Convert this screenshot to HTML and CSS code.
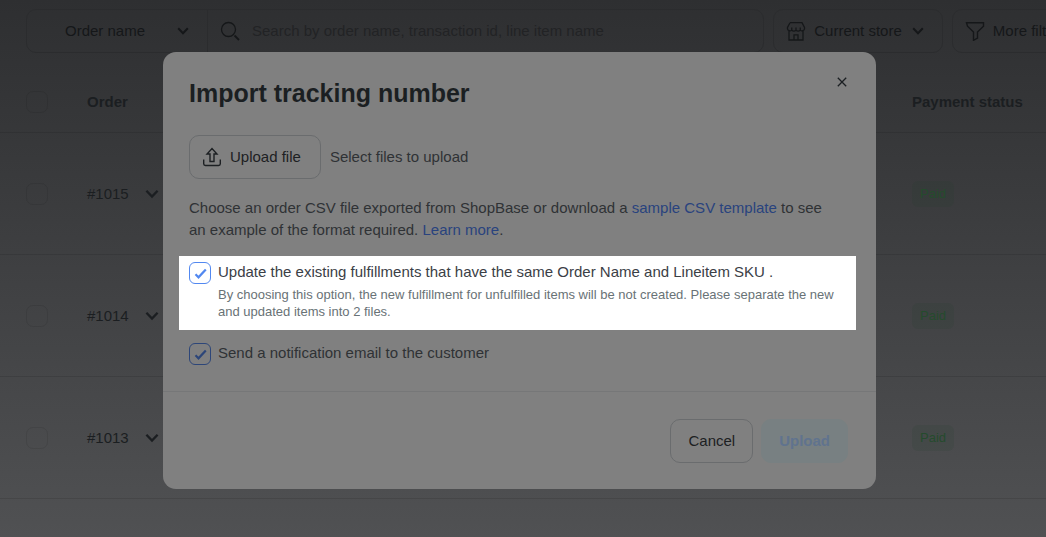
FILE: index.html
```html
<!DOCTYPE html>
<html lang="en">
<head>
<meta charset="utf-8">
<meta name="viewport" content="width=device-width, initial-scale=1">
<title>Import tracking number</title>
<link rel="stylesheet" href="styles.css">
</head>
<body>
<svg class="sprite" aria-hidden="true">
  <symbol id="chevron" viewBox="0 0 12 8"><path d="M1.2 1.2 6 6.2l4.800-5" fill="none" stroke="currentColor" stroke-width="2"/></symbol>
  <symbol id="tick" viewBox="0 0 22 22"><path d="m6.500 12.300 3 3L16.800 7.500" fill="none" stroke="currentColor" stroke-width="2.200"/></symbol>
</svg>
<main class="page">
  <div class="toolbar">
    <div class="search">
      <div class="search-field">
        <select class="search-select" aria-label="Search by field"><option>Order name</option></select>
        <svg class="chevron search-chevron"><use href="#chevron"/></svg>
      </div>
      <svg class="icon" viewBox="0 0 20 20" fill="none" stroke="currentColor" stroke-width="1.300"><circle cx="8.500" cy="8.500" r="7"/><path d="m14.500 14.500 4.500 4.500" stroke-width="1.800"/></svg>
      <input class="search-input" type="search" aria-label="Search orders" placeholder="Search by order name, transaction id, line item name">
    </div>
    <button class="tool-button" type="button">
      <svg class="icon" viewBox="0 0 20 20" fill="none" stroke="currentColor" stroke-width="1.300"><path d="M4 1.700h12l2.500 4.800v1.300a2.500 2.500 0 0 1-4.250 1.300 2.800 2.800 0 0 1-4.250 0 2.800 2.800 0 0 1-4.250 0A2.500 2.500 0 0 1 1.500 7.800V6.500L4 1.700M5.750 6.500v2.600M10 6.500v2.600M14.250 6.500v2.600M3 10v9h14v-9M8 19v-5.200h4V19"/></svg>
      Current store
      <svg class="chevron tool-chevron"><use href="#chevron"/></svg>
    </button>
    <button class="tool-button" type="button">
      <svg class="icon" viewBox="0 0 20 20" fill="none" stroke="currentColor" stroke-width="1.400"><path d="M1.500 1.700h17v3.500l-6 5.800v6l-4 2.300V11l-6-5.800z"/></svg>
      More filters
    </button>
  </div>
  <table class="orders">
    <thead>
      <tr><th class="col-check"><input class="row-check" type="checkbox" aria-label="Select all orders"></th><th>Order</th><th class="col-status">Payment status</th></tr>
    </thead>
    <tbody>
      <tr><td class="col-check"><input class="row-check" type="checkbox" aria-label="Select order 1015"></td><td><span class="order">#1015 <svg class="chevron chevron-large"><use href="#chevron"/></svg></span></td><td class="col-status"><span class="badge">Paid</span></td></tr>
      <tr><td class="col-check"><input class="row-check" type="checkbox" aria-label="Select order 1014"></td><td><span class="order">#1014 <svg class="chevron chevron-large"><use href="#chevron"/></svg></span></td><td class="col-status"><span class="badge">Paid</span></td></tr>
      <tr><td class="col-check"><input class="row-check" type="checkbox" aria-label="Select order 1013"></td><td><span class="order">#1013 <svg class="chevron chevron-large"><use href="#chevron"/></svg></span></td><td class="col-status"><span class="badge">Paid</span></td></tr>
    </tbody>
  </table>
</main>
<div class="overlay">
  <section class="modal" role="dialog" aria-modal="true" aria-labelledby="modal-title">
    <header class="modal-header">
      <h1 class="modal-title" id="modal-title">Import tracking number</h1>
      <button class="close" type="button" aria-label="Close"><svg viewBox="0 0 10 10"><path d="m.8.8 8.400 8.400M9.200.8.8 9.200" fill="none" stroke="currentColor" stroke-width="1.300"/></svg></button>
    </header>
    <div class="modal-body">
      <div class="upload">
        <button class="button button-upload" type="button">
          <svg class="icon" viewBox="0 0 20 20" fill="none" stroke="currentColor" stroke-width="1.400"><path d="M1.700 12.500v4.300q0 1.700 1.700 1.700h13.200q1.700 0 1.700-1.700v-4.300M8 14.500V7H5l5-5.500L15 7h-3v7.500z"/></svg>
          Upload file
        </button>
        <span>Select files to upload</span>
      </div>
      <p class="intro">Choose an order CSV file exported from ShopBase or download a <a href="#template">sample CSV template</a> to see an example of the format required. <a href="#help">Learn more</a>.</p>
      <div class="option option-highlight">
        <span class="check"><input class="check-box" type="checkbox" id="update" aria-describedby="update-help" checked><svg class="check-mark"><use href="#tick"/></svg></span>
        <div class="option-text">
          <label for="update">Update the existing fulfillments that have the same Order Name and Lineitem SKU .</label>
          <p class="help" id="update-help">By choosing this option, the new fulfillment for unfulfilled items will be not created. Please separate the new and updated items into 2 files.</p>
        </div>
      </div>
      <div class="option">
        <span class="check"><input class="check-box" type="checkbox" id="notify" checked><svg class="check-mark"><use href="#tick"/></svg></span>
        <div class="option-text"><label for="notify">Send a notification email to the customer</label></div>
      </div>
    </div>
    <footer class="modal-footer">
      <button class="button" type="button">Cancel</button>
      <button class="button button-primary" type="button" disabled>Upload</button>
    </footer>
  </section>
</div>
</body>
</html>
```
FILE: styles.css
```css
* { box-sizing: border-box; }
body {
  margin: 0;
  min-height: 100vh;
  overflow: hidden;
  font: 15px/22px "Liberation Sans", Arial, sans-serif;
  color: #1b1e21;
  background: linear-gradient(#2e2f31, #505153);
}
button, input, select { font: inherit; color: inherit; }
p, h1 { margin: 0; }
.sprite { position: absolute; width: 0; height: 0; }
.icon { width: 20px; height: 20px; flex: none; }
.chevron { width: 12px; height: 8px; flex: none; }
.chevron-large { width: 14px; height: 10px; }

.page { margin-right: -40px; }
.toolbar { display: flex; gap: 9px; padding: 9px 0 0 26px; color: #151719; }
.search {
  display: flex;
  flex: 1;
  align-items: center;
  height: 44px;
  border: 1px solid #2b2c2e;
  border-radius: 10px;
}
.search-field {
  display: grid;
  align-items: center;
  width: 181px;
  height: 100%;
  margin-right: 12px;
  border-right: 1px solid #2b2c2e;
}
.search-select, .search-chevron { grid-area: 1 / 1; }
.search-select {
  height: 100%;
  padding: 0 0 0 38px;
  border: 0;
  background: none;
  appearance: none;
}
.search-chevron { justify-self: end; margin-right: 18px; pointer-events: none; }
.search-input {
  flex: 1;
  min-width: 0;
  padding: 0 12px;
  border: 0;
  background: none;
}
.search-input::placeholder { color: #222325; opacity: 1; }
.tool-button {
  display: flex;
  align-items: center;
  gap: 8px;
  height: 44px;
  padding: 0 18px 0 12px;
  border: 1px solid #2b2c2e;
  border-radius: 10px;
  background: none;
  white-space: nowrap;
}
.tool-chevron { margin-left: 2px; }

.orders { width: 100%; margin-top: 17px; border-collapse: collapse; table-layout: fixed; }
.orders th, .orders td { padding: 2px 0 0; border-bottom: 1px solid rgb(0 0 0 / 10%); text-align: left; }
.orders th { height: 62px; font-size: 15px; }
.orders td { height: 122px; }
.orders .col-check { width: 87px; padding-left: 26px; }
.orders .col-status { width: 174px; }
.row-check {
  display: block;
  width: 22px;
  height: 22px;
  margin: 0;
  border: 1px solid rgb(0 0 0 / 8%);
  border-radius: 7px;
  appearance: none;
}
.order { display: flex; align-items: center; gap: 16px; }
.badge {
  display: inline-block;
  padding: 2px 8px;
  border-radius: 6px;
  font-size: 13px;
  color: #254b2d;
  background: rgb(35 65 45 / 14%);
}

.overlay {
  position: fixed;
  inset: 0;
  display: flex;
  align-items: center;
  justify-content: center;
  padding: 4px 7px 0 0;
}
.modal {
  width: 100%;
  max-width: 713px;
  border-radius: 13px;
  color: #2f3235;
  background: #808080;
}
.modal-header { display: flex; justify-content: space-between; padding: 24px 26px 0; }
.modal-title { font-size: 25px; line-height: 34px; color: #1b1f22; }
.close { width: 16px; height: 12px; padding: 0 3px; border: 0; background: none; color: #1b1f22; }
.close svg { display: block; width: 10px; height: 10px; }
.modal-body { padding: 25px 26px 26px; border-bottom: 1px solid #767778; }
.upload { display: flex; align-items: center; gap: 9px; }
.button {
  height: 44px;
  padding: 0 17px;
  border: 1px solid #6a6c6e;
  border-radius: 10px;
  color: #1d2023;
  background: none;
}
.button-upload { display: flex; align-items: center; gap: 8px; padding: 0 19px 0 12px; }
.intro { margin: 18px 0 15px; padding-right: 10px; }
.intro a { color: #29437e; text-decoration: none; }
.option { display: flex; gap: 7px; }
.option-highlight {
  margin: 0 -6px 12px -10px;
  padding: 5px 10px 10px;
  color: #3b4046;
  background: #fff;
}
.option-text { flex: 1; }
.check { display: grid; width: 22px; height: 22px; margin-top: 1px; color: #2d4679; }
.check-box, .check-mark { grid-area: 1 / 1; width: 22px; height: 22px; margin: 0; }
.check-box { border: 1px solid currentColor; border-radius: 6px; appearance: none; }
.check-mark { visibility: hidden; pointer-events: none; }
.check-box:checked + .check-mark { visibility: visible; }
.option-highlight .check { color: #5288f0; }
.help { margin-top: 3px; font-size: 13px; line-height: 17px; color: #697276; }
.modal-footer { display: flex; justify-content: flex-end; gap: 8px; padding: 27px 28px 26px; }
.button-primary { border-color: #788082; font-weight: bold; color: #60738e; background: #788082; }
```
